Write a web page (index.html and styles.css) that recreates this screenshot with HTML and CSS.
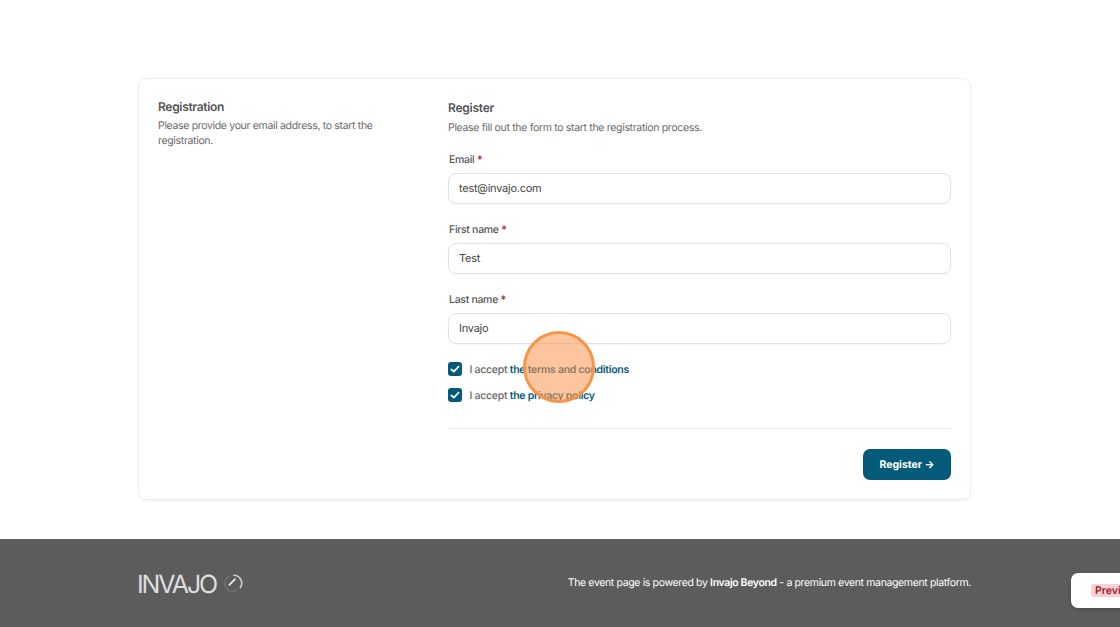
FILE: index.html
```html
<!DOCTYPE html>
<html lang="en">
<head>
<meta charset="utf-8">
<title>Registration</title>
<link rel="stylesheet" href="styles.css">
</head>
<body>
<main class="main">
  <section class="card">
    <div class="intro">
      <h2 class="intro-title">Registration</h2>
      <p class="intro-text">Please provide your email address, to start the registration.</p>
    </div>
    <form class="form">
      <h2 class="form-title">Register</h2>
      <p class="form-text">Please fill out the form to start the registration process.</p>
      <div class="field">
        <div class="label">Email <span class="req">*</span></div>
        <div class="input">test@invajo.com</div>
      </div>
      <div class="field">
        <div class="label">First name <span class="req">*</span></div>
        <div class="input">Test</div>
      </div>
      <div class="field">
        <div class="label">Last name <span class="req">*</span></div>
        <div class="input">Invajo</div>
      </div>
      <div class="checks">
        <div class="check">
          <span class="box"><svg viewBox="0 0 14 14" width="14" height="14"><path d="M3.4 7.3l2.4 2.3 4.8-5" fill="none" stroke="#fff" stroke-width="1.7" stroke-linecap="round" stroke-linejoin="round"/></svg></span>
          <span>I accept <a class="link">the terms and conditions</a></span>
        </div>
        <div class="check">
          <span class="box"><svg viewBox="0 0 14 14" width="14" height="14"><path d="M3.4 7.3l2.4 2.3 4.8-5" fill="none" stroke="#fff" stroke-width="1.7" stroke-linecap="round" stroke-linejoin="round"/></svg></span>
          <span>I accept <a class="link">the privacy policy</a></span>
        </div>
      </div>
      <div class="actions">
        <div class="button">Register →</div>
      </div>
    </form>
  </section>
</main>
<footer class="footer">
  <div class="footer-inner">
    <div class="logo">
      <span class="logo-text">INVAJO</span>
      <svg class="logo-mark" viewBox="0 0 24 24" width="22" height="22">
        <path d="M8 4.5A9 9 0 0 0 7 20a9 9 0 0 0 9.5-.5" fill="none" stroke="#6c6c6c" stroke-width="2.2"/>
        <path d="M13 3.6A8.6 8.6 0 0 1 20 17" fill="none" stroke="#ccc" stroke-width="1.8" stroke-linecap="round"/>
        <path d="M8 14l6-6" fill="none" stroke="#e6e6e6" stroke-width="2" stroke-linecap="round"/>
      </svg>
    </div>
    <p class="powered">The event page is powered by <b>Invajo Beyond</b> - a premium event management platform.</p>
  </div>
</footer>
<div class="preview"><span class="preview-badge">Preview</span></div>
<div class="cursor"></div>
</body>
</html>
```
FILE: styles.css
```css
* { box-sizing: border-box; }
html, body { margin: 0; height: 627px; overflow: hidden; }
body { position: relative; background: #fff; font-family: Inter, "Liberation Sans", sans-serif; text-rendering: geometricPrecision; color: #4f4f4f; }
.main { height: 539px; padding: 78px 149px 0 138px; }
.card { height: 422px; display: flex; padding: 20px 19px 0; border: 1px solid #eeeeee; border-radius: 8px; box-shadow: 0 1px 3px rgba(0,0,0,.05); }
.intro { width: 290px; flex: none; padding-right: 60px; }
.intro-title { margin: 0; font-size: 12px; line-height: 16px; font-weight: 600; letter-spacing: -.32px; color: #555; }
.intro-text { margin: 3px 0 0; font-size: 10.5px; line-height: 15px; letter-spacing: -.33px; color: #6a6a6a; }
.form { flex: 1; }
.form-title { margin: 1px 0 0; font-size: 12px; line-height: 16px; font-weight: 600; letter-spacing: -.25px; color: #555; }
.form-text { margin: 4px 0 0; font-size: 10.5px; line-height: 15px; letter-spacing: -.32px; color: #6a6a6a; }
.field { margin-top: 17px; }
.field + .field { margin-top: 18px; }
.label { padding-left: 1px; font-size: 10.5px; line-height: 15px; font-weight: 500; letter-spacing: -.3px; color: #555; }
.req { color: #a8202f; font-weight: 600; }
.input { margin-top: 6px; height: 31px; padding: 0 10px 1px; display: flex; align-items: center; border: 1px solid #e2e2e2; border-radius: 8px; font-size: 11px; letter-spacing: -.25px; color: #444; box-shadow: 0 1px 2px rgba(0,0,0,.04); }
.checks { margin-top: 18px; display: flex; flex-direction: column; gap: 12px; }
.check { display: flex; align-items: center; gap: 7.5px; height: 14px; font-size: 10.5px; font-weight: 500; letter-spacing: -.28px; color: #666; }
.box { width: 14px; height: 14px; flex: none; border-radius: 3px; background: #045a78; display: flex; }
.link { color: #045a78; font-weight: 600; }
.actions { margin-top: 26px; padding-top: 20px; border-top: 1px solid #eaeaea; display: flex; justify-content: flex-end; }
.button { width: 88px; height: 31px; display: flex; align-items: center; justify-content: center; border-radius: 7px; background: #045a78; color: #fff; font-size: 10.5px; font-weight: 700; }
.footer { height: 88px; background: #5c5c5c; padding: 0 149px 0 138px; }
.footer-inner { display: flex; justify-content: space-between; padding-top: 31px; }
.logo { display: flex; align-items: center; gap: 6px; height: 28px; }
.logo-text { margin: 2px 0 0 -1px; font-size: 25px; font-weight: 400; letter-spacing: -2.1px; color: #dedede; }
.logo-mark { margin-top: -3px; }
.powered { margin: 5px 0 0; font-size: 10.5px; line-height: 16px; letter-spacing: -.36px; color: #fff; }
.powered b { font-weight: 600; }
.preview { position: absolute; left: 1071px; top: 573px; width: 80px; height: 35px; padding: 11px 0 0 20px; display: flex; align-items: flex-start; border-radius: 7px 0 0 7px; background: #fff; box-shadow: 0 1px 4px rgba(0,0,0,.2); }
.preview-badge { padding: 0 4px; border-radius: 3px; background: #fbd0d2; color: #9b2030; font-size: 10.5px; line-height: 13px; font-weight: 600; }
.cursor { position: absolute; left: 523px; top: 331px; width: 72px; height: 72px; border-radius: 50%; background: rgba(250,150,80,.55); border: 3px solid #f4964a; }
```
